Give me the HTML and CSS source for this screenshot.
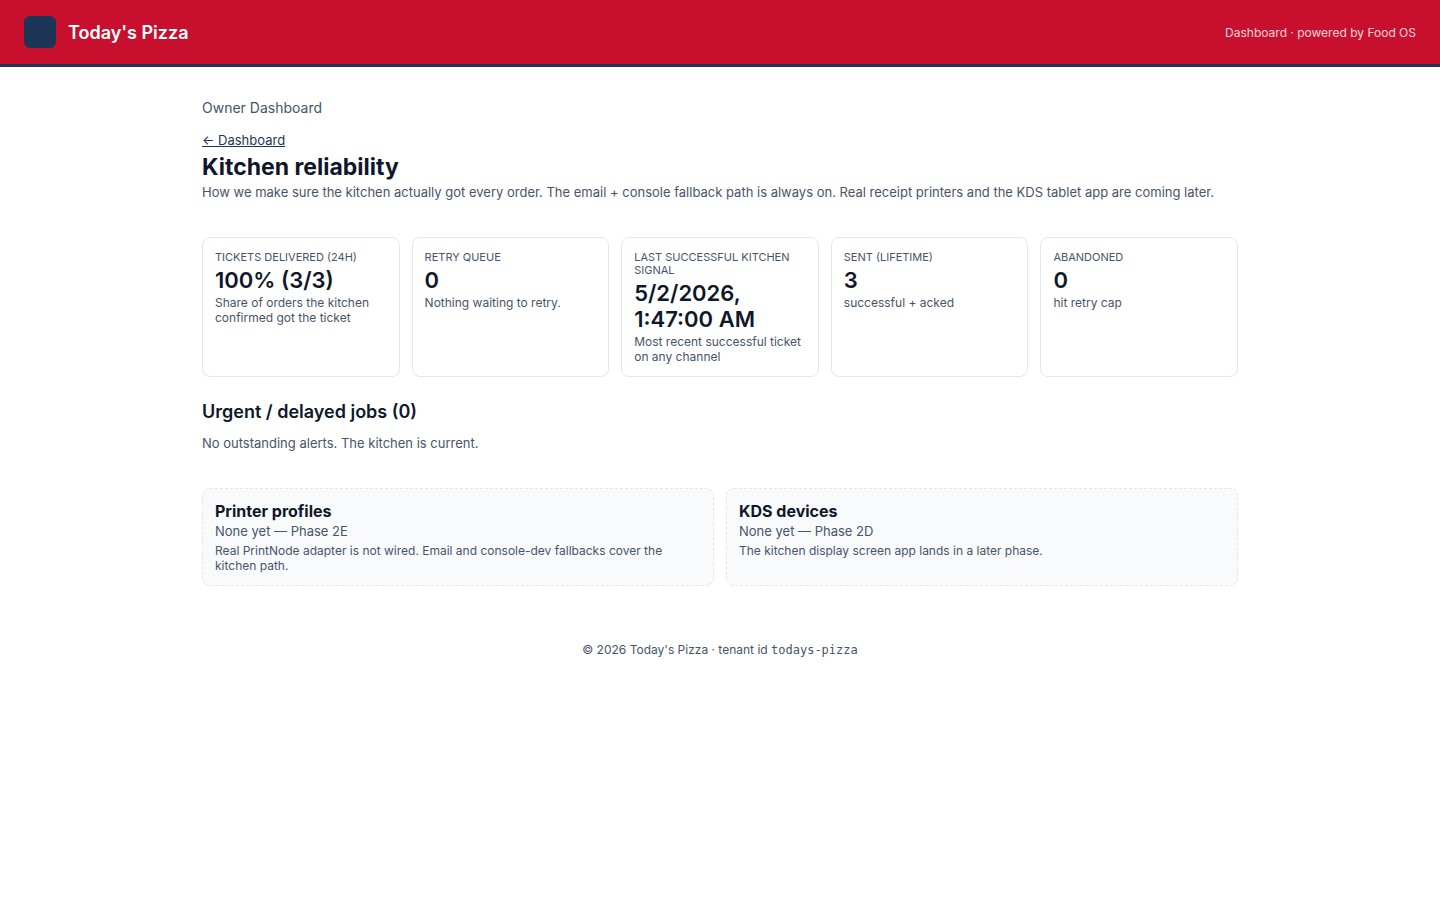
FILE: index.html
```html
<!DOCTYPE html>
<html lang="en">
<head>
<meta charset="utf-8">
<meta name="viewport" content="width=device-width, initial-scale=1">
<title>Kitchen reliability</title>
<link rel="stylesheet" href="styles.css">
</head>
<body>
<header class="site-header">
  <div class="brand"><span class="brand-mark"></span><span class="brand-name">Today's Pizza</span></div>
  <span class="powered">Dashboard · powered by Food OS</span>
</header>
<main class="page">
  <p class="eyebrow">Owner Dashboard</p>
  <header class="intro">
    <a class="back" href="#">← Dashboard</a>
    <h1 class="title">Kitchen reliability</h1>
    <p class="text">How we make sure the kitchen actually got every order. The email + console fallback path is always on. Real receipt printers and the KDS tablet app are coming later.</p>
  </header>
  <section class="stats">
    <article class="card"><div class="label">Tickets delivered (24h)</div><div class="value">100% (3/3)</div><div class="hint">Share of orders the kitchen confirmed got the ticket</div></article>
    <article class="card"><div class="label">Retry queue</div><div class="value">0</div><div class="hint">Nothing waiting to retry.</div></article>
    <article class="card"><div class="label">Last successful kitchen signal</div><div class="value">5/2/2026, 1:47:00 AM</div><div class="hint">Most recent successful ticket on any channel</div></article>
    <article class="card"><div class="label">Sent (lifetime)</div><div class="value">3</div><div class="hint">successful + acked</div></article>
    <article class="card"><div class="label">Abandoned</div><div class="value">0</div><div class="hint">hit retry cap</div></article>
  </section>
  <section class="jobs">
    <h2 class="section-title">Urgent / delayed jobs (0)</h2>
    <p class="text">No outstanding alerts. The kitchen is current.</p>
  </section>
  <section class="panels">
    <article class="card panel"><h3 class="panel-title">Printer profiles</h3><p class="text">None yet — Phase 2E</p><p class="hint">Real PrintNode adapter is not wired. Email and console-dev fallbacks cover the kitchen path.</p></article>
    <article class="card panel"><h3 class="panel-title">KDS devices</h3><p class="text">None yet — Phase 2D</p><p class="hint">The kitchen display screen app lands in a later phase.</p></article>
  </section>
</main>
<footer class="site-footer">© 2026 Today's Pizza · tenant id <code class="tenant">todays-pizza</code></footer>
</body>
</html>
```
FILE: styles.css
```css
* { box-sizing: border-box; }
body, h1, h2, h3, p { margin: 0; }
body {
  background: #fff;
  color: #0f172a;
  font-family: Inter, "Liberation Sans", sans-serif;
  font-size: 16px;
}
.site-header {
  display: flex;
  align-items: center;
  justify-content: space-between;
  padding: 16px 24px;
  background: #c8102e;
  border-bottom: 3px solid #1d3557;
  color: #fff;
}
.brand { display: flex; align-items: center; gap: 12px; }
.brand-mark { width: 32px; height: 32px; border-radius: 6px; background: #1d3557; }
.brand-name { font-size: 18px; font-weight: 600; }
.powered { font-size: 12px; opacity: 0.8; }
.page { max-width: 1100px; margin: 0 auto; padding: 32px 32px 0; }
.eyebrow { font-size: 14px; line-height: 18px; color: #475569; margin-bottom: 16px; }
.intro { margin-bottom: 37px; }
.back { display: block; width: fit-content; font-size: 13px; line-height: 15px; color: #1d3557; }
.title { font-size: 23px; line-height: 30px; font-weight: 700; margin: 4px 0 3px; }
.text { font-size: 13px; line-height: 15px; color: #475569; }
.stats { display: grid; grid-template-columns: repeat(5, 1fr); gap: 12px; margin-bottom: 24px; }
.card { border: 1px solid #e2e8f0; border-radius: 8px; padding: 13px 12px 12px; }
.label { font-size: 11px; line-height: 13px; text-transform: uppercase; color: #475569; }
.value { font-size: 22px; line-height: 26px; font-weight: 600; margin: 3px 0 2px; }
.hint { font-size: 12px; line-height: 15px; color: #475569; }
.jobs { margin-bottom: 37px; }
.section-title { font-size: 18px; line-height: 22px; font-weight: 600; margin-bottom: 13px; }
.panels { display: grid; grid-template-columns: repeat(2, 1fr); gap: 12px; }
.panel { border-style: dashed; background: #f8fafc; }
.panel-title { font-size: 16px; line-height: 19px; font-weight: 700; margin-bottom: 3px; }
.panel .hint { margin-top: 4px; }
.site-footer { padding: 56px 24px 32px; text-align: center; font-size: 12px; line-height: 15px; color: #475569; }
.tenant { font-family: "DejaVu Sans Mono", monospace; font-size: 12px; }
```
